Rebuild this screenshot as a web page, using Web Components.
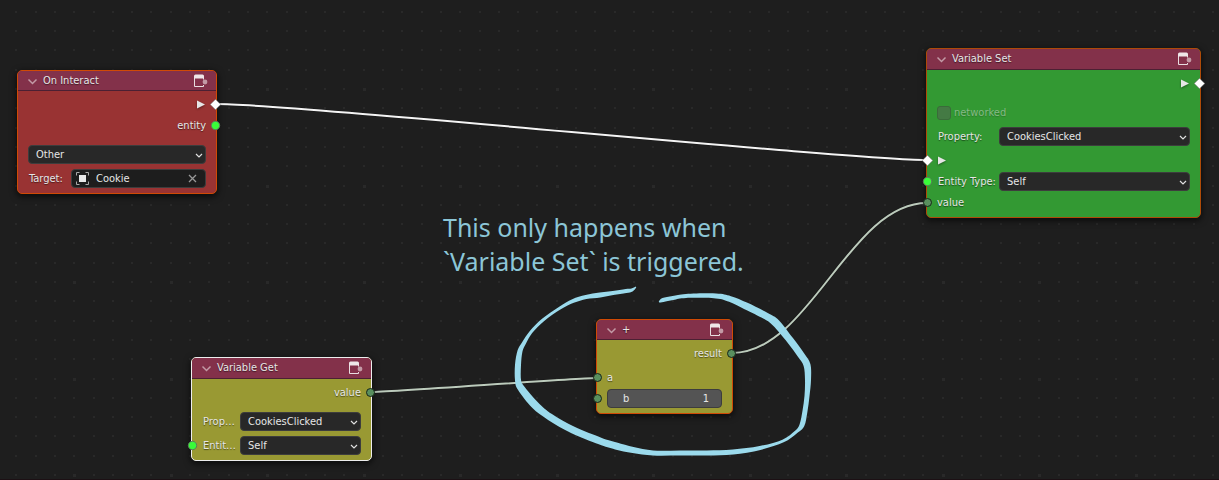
<!DOCTYPE html>
<html lang="en">
<head>
<meta charset="utf-8">
<title>Node editor</title>
<style>
  html, body { margin: 0; background: #1e1e1e; }
  body { font: 11px/14px "DejaVu Sans Condensed", "DejaVu Sans", sans-serif; color: #e6e6e6; }
</style>
</head>
<body>
<node-editor>
  <node-wires></node-wires>

  <flow-node heading="On Interact" style="--x:17px;--y:70px;--w:200px;--head:20px;--body:#993333;--edge:#d04a05;--label:43px">
    <socket-row align="end"><exec-arrow></exec-arrow><node-socket slot="out" kind="exec"></node-socket></socket-row>
    <socket-row align="end">entity<node-socket slot="out" kind="entity"></node-socket></socket-row>
    <socket-row space="section"><drop-field name="Source" bare value="Other"></drop-field></socket-row>
    <socket-row space="item"><object-field name="Target:" value="Cookie"></object-field></socket-row>
  </flow-node>

  <flow-node heading="Variable Set" style="--x:926px;--y:48px;--w:275px;--head:21px;--body:#339933;--edge:#ae4a08;--label:62px">
    <socket-row align="end"><exec-arrow></exec-arrow><node-socket slot="out" kind="exec"></node-socket></socket-row>
    <socket-row space="section"><check-field name="networked"></check-field></socket-row>
    <socket-row space="item"><drop-field name="Property:" value="CookiesClicked"></drop-field></socket-row>
    <socket-row space="item"><node-socket slot="in" kind="exec"></node-socket><exec-arrow></exec-arrow></socket-row>
    <socket-row><node-socket slot="in" kind="entity"></node-socket><drop-field name="Entity Type:" value="Self"></drop-field></socket-row>
    <socket-row><node-socket slot="in" kind="value"></node-socket>value</socket-row>
  </flow-node>

  <flow-node heading="Variable Get" style="--x:191px;--y:357px;--w:181px;--head:21px;--body:#999933;--edge:#ededed;--label:38px">
    <socket-row align="end">value<node-socket slot="out" kind="value"></node-socket></socket-row>
    <socket-row space="section"><drop-field name="Prop…" value="CookiesClicked"></drop-field></socket-row>
    <socket-row space="item"><node-socket slot="in" kind="entity"></node-socket><drop-field name="Entit…" value="Self"></drop-field></socket-row>
  </flow-node>

  <flow-node heading="+" style="--x:596px;--y:319px;--w:137px;--head:20px;--body:#999933;--edge:#d04a05">
    <socket-row align="end">result<node-socket slot="out" kind="value"></node-socket></socket-row>
    <socket-row space="item"><node-socket slot="in" kind="value"></node-socket>a</socket-row>
    <socket-row><node-socket slot="in" kind="value"></node-socket><number-field name="b" value="1"></number-field></socket-row>
  </flow-node>

  <canvas-note style="--x:443px;--y:210px">This only happens when<br>`Variable Set` is triggered.</canvas-note>
</node-editor>

<script>
const define = (name, render, after) => customElements.define(name, class extends HTMLElement {
  connectedCallback() {
    if (this.shadowRoot) return;
    const root = this.attachShadow({ mode: "open" });
    root.innerHTML = render(this);
    if (after) after(this, root);
  }
});

define("node-editor", () => `
  <style>
    :host { display: block; position: relative; box-sizing: border-box; min-height: 100vh; overflow: hidden;
            background: #1e1e1e; border-bottom: 1px solid #1c1014; }
    .grid { position: absolute; inset: 0; width: 100%; height: 100%; }
  </style>
  <svg class="grid" shape-rendering="crispEdges" aria-hidden="true"><path fill="#292929"/></svg>
  <slot></slot>`, (host, root) => {
    const step = 19.3;
    const draw = () => {
      let d = "";
      for (let j = 0; 11.8 + j * step < host.clientHeight; j++)
        for (let i = 0; i * step - 4 < host.clientWidth; i++) {
          const s = (i % 5 === 4) && (j % 5 === 4) ? 3 : 2;
          d += `M${Math.round(-4 + i * step)} ${Math.floor(11.3 + j * step)}h${s}v${s}h-${s}z`;
        }
      root.querySelector("path").setAttribute("d", d);
    };
    draw();
    addEventListener("resize", draw);
  });

/* Hand-drawn ring: centre line points as x, y, pen width. */
const ring = [
  [636,287,1],[632,290,3],[626,291,4],[613,293,4],[600,295,5],[586,297,4],[573,301,4],[560,308,3],[543,320,3],
  [531,332,3],[524,343,4],[520,351,5],[518,365,6],[518,380,6],[521,388,7],[535,405,8],[550,417,7],[573,430,7],
  [600,441,7],[616,446,7],[633,450,6],[653,453,5],[680,453,5],[707,453,5],[733,452,5],[760,448,4],[783,441,3],
  [796,432,3],[802,425,5],[805,411,5],[807,396,5],[808,380,6],[807,365,7],[801,355,7],[790,340,7],[776,323,8],
  [766,316,7],[746,306,7],[730,299,6],[716,296,5],[686,296,4],[673,298,4],[663,300,4],[659,302,1]
];
const inkOutline = pts => {
  const left = [], right = [];
  pts.forEach(([x, y, w], i) => {
    const a = pts[Math.max(0, i - 1)], b = pts[Math.min(pts.length - 1, i + 1)];
    const dx = b[0] - a[0], dy = b[1] - a[1], k = w / 2 / Math.hypot(dx, dy);
    left.push([x - dy * k, y + dx * k]);
    right.unshift([x + dy * k, y - dx * k]);
  });
  const curve = (p, lead) => p.reduce((d, c, i) => {
    if (!i) return lead + c.join(" ");
    const a = p[Math.max(0, i - 2)], b = p[i - 1], e = p[Math.min(p.length - 1, i + 1)];
    return d + `C${b[0] + (c[0] - a[0]) / 6} ${b[1] + (c[1] - a[1]) / 6} ${c[0] - (e[0] - b[0]) / 6} ${c[1] - (e[1] - b[1]) / 6} ${c[0]} ${c[1]}`;
  }, "");
  return curve(left, "M") + curve(right, "L") + "z";
};

/* Shallow links bend less: the handle length shrinks with the slope. */
const link = (x1, y1, x2, y2) => {
  const dx = x2 - x1, h = dx * 0.4 * Math.min(1, Math.abs((y2 - y1) / dx) * 3.5);
  return `M${x1} ${y1}C${x1 + h} ${y1} ${x2 - h} ${y2} ${x2} ${y2}`;
};
const execLink = link(216, 104, 927, 160);
const valueLinks = link(371, 392, 597, 378) + link(732, 353, 927, 203);

define("node-wires", () => `
  <style>
    :host { display: block; position: absolute; inset: 0; }
    svg { width: 100%; height: 100%; display: block; }
    .wire { fill: none; stroke-width: 2; stroke: #bccbbc; }
    .exec { stroke: #f4f4f4; }
    .back { fill: none; stroke: #101010; stroke-width: 3; opacity: .5; }
  </style>
  <svg aria-hidden="true">
    <path class="back" d="${execLink + valueLinks}"/>
    <path class="wire exec" d="${execLink}"/>
    <path class="wire" d="${valueLinks}"/>
    <path fill="#9bdaec" d="${inkOutline(ring)}"/>
  </svg>`);

define("canvas-note", () => `
  <style>
    :host { display: block; position: absolute; left: var(--x); top: var(--y); white-space: nowrap;
            font: 25px/34px "Noto Sans", "Open Sans", sans-serif; color: #8cc6d7; }
  </style><slot></slot>`);

define("flow-node", el => `
  <style>
    :host { display: block; position: absolute; left: var(--x); top: var(--y); width: var(--w); box-sizing: border-box;
            border: 1px solid var(--edge); border-radius: 5px; background: var(--body);
            box-shadow: 0 2px 6px 1px rgba(0,0,0,.6); }
    header { display: flex; align-items: center; height: var(--head); box-sizing: border-box; padding: 0 7px 0 9px;
             background: #83314a; border-bottom: 1px solid #4c2033; border-radius: 4px 4px 0 0; }
    button { all: unset; display: flex; width: 16px; }
    h2 { margin: 0; flex: 1; font: inherit; text-shadow: 0 1px 1px rgba(0,0,0,.5); }
    .body { display: flex; flex-direction: column; padding: 3px 0 4px; }
  </style>
  <header>
    <button aria-label="Collapse"><svg width="11" height="12" fill="none" stroke="#c39aa6" stroke-width="1.500"><path d="M1.500 4.500L5.500 8.500L9.500 4.500"/></svg></button>
    <h2>${el.getAttribute("heading")}</h2>
    <svg width="15" height="14" aria-hidden="true">
      <path d="M.5 4V12.500H9.500V11M9.500 3.500V5.500" fill="none" stroke="#e8dde0"/>
      <path d="M0 4.500V2Q0 .5 1.500 .5H8.500Q10 .5 10 2V4.500z" fill="#eee6e8"/>
      <circle cx="11" cy="8" r="2.400" fill="#c39aa6"/>
    </svg>
  </header>
  <div class="body"><slot></slot></div>`);

define("socket-row", () => `
  <style>
    :host { display: flex; align-items: center; position: relative; height: 21px; padding: 0 10px;
            text-shadow: 0 1px 1px rgba(0,0,0,.5); }
    :host([align=end]) { justify-content: flex-end; }
    :host([space=item]) { margin-top: 3px; }
    :host([space=section]) { margin-top: 8px; }
  </style><slot name="in"></slot><slot></slot><slot name="out"></slot>`);

define("node-socket", el => {
  const kind = el.getAttribute("kind");
  const mark = kind === "exec"
    ? `<path d="M5.500 .2L10.800 5.500L5.500 10.800L.2 5.500Z" fill="#fff" stroke="#66666688"/>`
    : kind === "entity" ? `<circle cx="5.500" cy="5.500" r="4.200" fill="#39fb39" stroke="#5d7a5d"/>`
    : `<circle cx="5.500" cy="5.500" r="4" fill="#598f5e" stroke="#17251a"/>`;
  return `
  <style>
    :host { display: block; position: absolute; top: 5px; width: 11px; height: 11px; }
    :host([slot=in]) { left: -5px; }
    :host([slot=out]) { right: -5px; }
    svg { display: block; }
  </style><svg width="11" height="11" aria-hidden="true">${mark}</svg>`;
});

define("exec-arrow", () => `
  <style>
    :host { display: block; }
    svg { display: block; filter: drop-shadow(0 1px 1px rgba(0,0,0,.4)); }
  </style><svg width="10" height="9" aria-hidden="true"><path d="M1 .5L9 4.500L1 8.500Z" fill="#e6e6e6"/></svg>`);

const fieldStyle = `
    :host { display: flex; flex: 1; align-items: center; min-width: 0; }
    label { flex: none; width: var(--label); padding-left: 1px; box-sizing: border-box; white-space: nowrap; }
    .box { display: flex; flex: 1; align-items: center; min-width: 0; height: 19px; box-sizing: border-box;
           border: 1px solid #3d3d3d; border-radius: 4px; background: #282828; text-shadow: none; }
    select, input { all: unset; flex: 1; min-width: 0; font: inherit; color: inherit; line-height: 17px; }`;

define("drop-field", el => `
  <style>${fieldStyle}
    .box { position: relative; }
    select { padding-left: 7px; padding-right: 16px; }
    svg { position: absolute; right: 2px; top: 5px; pointer-events: none; }
  </style>
  ${el.hasAttribute("bare") ? "" : `<label for="f">${el.getAttribute("name")}</label>`}
  <div class="box">
    <select id="f" aria-label="${el.getAttribute("name")}"><option>${el.getAttribute("value")}</option></select>
    <svg width="8" height="8" fill="none" stroke="#e0e0e0" stroke-width="1.200" aria-hidden="true"><path d="M1 3L4 6L7 3"/></svg>
  </div>`);

define("object-field", el => `
  <style>${fieldStyle}
    .box { background: #1d1d1d; padding: 0 8px 0 4px; }
    input { padding-left: 7px; }
    button { all: unset; display: flex; }
  </style>
  <label for="f">${el.getAttribute("name")}</label>
  <div class="box">
    <svg width="13" height="13" fill="none" stroke="#a8a8a8" aria-hidden="true"><path d="M.5 3.500V.5H3.500M9.500 .5H12.500V3.500M12.500 9.500V12.500H9.500M3.500 12.500H.5V9.500"/><path d="M3 3H10V10H3z" fill="#e8e8e8" stroke="none"/></svg>
    <input id="f" value="${el.getAttribute("value")}">
    <button aria-label="Clear"><svg width="9" height="9" stroke="#999" stroke-width="1.300"><path d="M1 1L8 8M8 1L1 8"/></svg></button>
  </div>`);

define("number-field", el => `
  <style>${fieldStyle}
    .box { background: #545454; padding: 0 12px 0 15px; }
    label { width: auto; padding: 0; }
    input { text-align: right; }
  </style>
  <div class="box"><label for="f">${el.getAttribute("name")}</label><input id="f" inputmode="numeric" value="${el.getAttribute("value")}"></div>`);

define("check-field", el => `
  <style>
    :host { display: flex; }
    label { display: flex; align-items: center; gap: 3px; color: #85b985; text-shadow: 0 1px 1px rgba(0,0,0,.2); }
    input { appearance: none; margin: 0; width: 14px; height: 14px; box-sizing: border-box;
            border: 1px solid #3a6b3a; border-radius: 3px; background: #447a44; }
  </style>
  <label><input type="checkbox" disabled>${el.getAttribute("name")}</label>`);
</script>
</body>
</html>
